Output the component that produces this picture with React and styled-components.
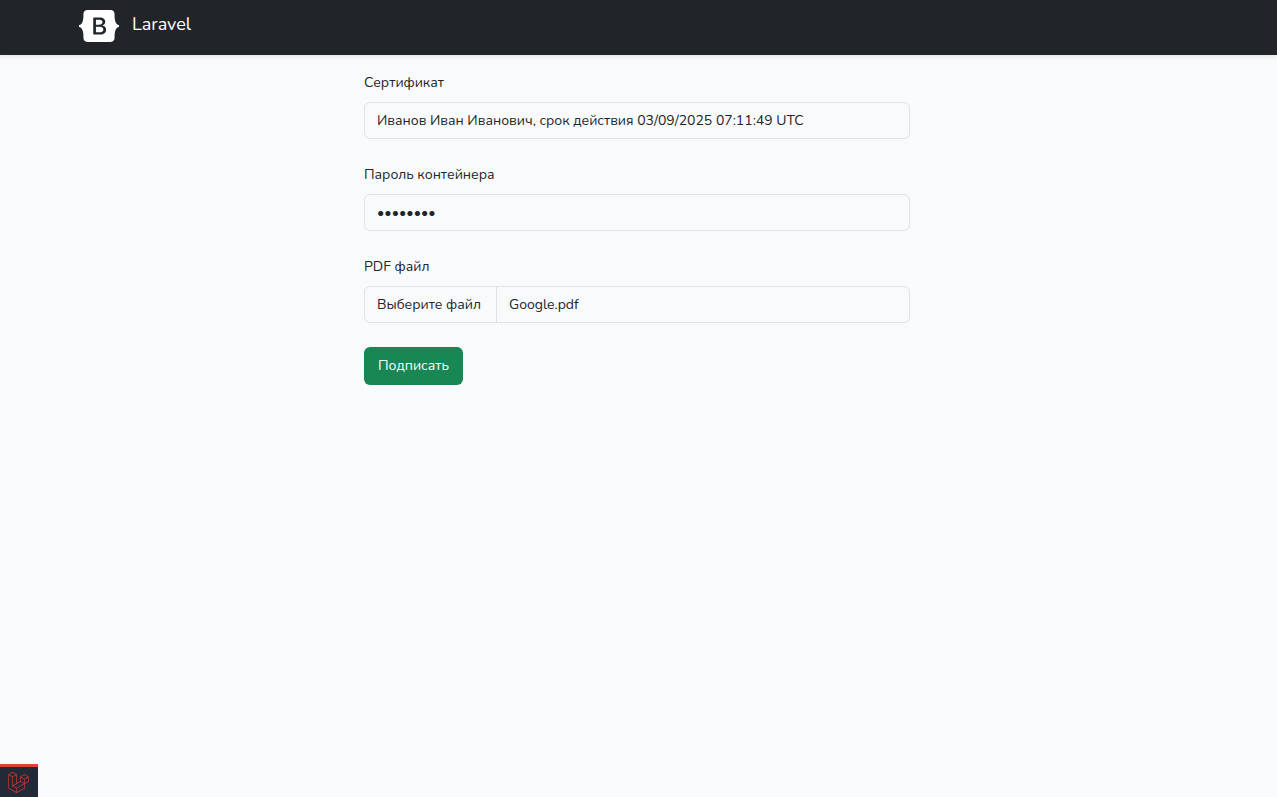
import React, { useState } from 'react';
import styled, { createGlobalStyle } from 'styled-components';
import { SiLaravel } from 'react-icons/si';

const GlobalStyle = createGlobalStyle`
  *,
  *::before,
  *::after {
    box-sizing: border-box;
  }

  body {
    margin: 0;
    background: #f8fafc;
    color: #212529;
    font-family: Nunito, 'Noto Sans', 'Open Sans', sans-serif;
    font-size: 14px;
    line-height: 23px;
  }
`;

const Container = styled.div`
  max-width: 1143px;
  margin: 0 auto;
  padding: 0 15px 0 12px;
`;

const Navbar = styled.nav`
  padding: 8px 0;
  background: #212529;
  box-shadow: 0 2px 4px rgba(0, 0, 0, 0.08);
`;

const Brand = styled.a`
  display: flex;
  gap: 13px;
  width: fit-content;
  height: 39px;
  padding-top: 2px;
  color: #fff;
  font-size: 18px;
  line-height: 28px;
  text-decoration: none;
`;

const Form = styled.form`
  display: flex;
  flex-direction: column;
  align-items: flex-start;
  gap: 24px;
  width: 100%;
  max-width: 546px;
  margin: 0 auto;
  padding: 16px 0;
`;

const Field = styled.div`
  display: flex;
  flex-direction: column;
  gap: 8px;
  position: relative;
  width: 100%;
`;

const Control = styled.input`
  display: block;
  width: 100%;
  height: 37px;
  margin: 0;
  padding: 6px 12px;
  border: 1px solid #dee2e6;
  border-radius: 6px;
  background: #f8fafc;
  color: inherit;
  font: inherit;
  appearance: none;
`;

const HiddenFileInput = styled.input`
  position: absolute;
  width: 1px;
  height: 1px;
  opacity: 0;
`;

const FilePicker = styled.label`
  display: flex;
  height: 37px;
  border: 1px solid #dee2e6;
  border-radius: 6px;
  overflow: hidden;
  cursor: pointer;
`;

const FilePart = styled.span`
  min-width: ${props => (props.$divided ? '132px' : '0')};
  padding: 6px 12px;
  border-right: ${props => (props.$divided ? '1px solid #dee2e6' : '0')};
`;

const SubmitButton = styled.button`
  min-width: 99px;
  height: 38px;
  padding: 7px 12px 8px;
  border: 0;
  border-radius: 6px;
  background: #198754;
  color: #fff;
  font: inherit;
  cursor: pointer;
`;

const DebugButton = styled.button`
  display: flex;
  align-items: center;
  justify-content: center;
  position: fixed;
  bottom: 0;
  left: 0;
  width: 38px;
  height: 33px;
  padding: 0 2px 0 0;
  border: 0;
  border-top: 3px solid #dc4437;
  background: #232936;
  color: #d33a31;
`;

const BootstrapLogo = () => (
  <svg width="40" height="32" viewBox="0 0 118 94" aria-hidden="true">
    <path
      fill="currentColor"
      fillRule="evenodd"
      clipRule="evenodd"
      d="M24.509 0c-6.733 0-11.715 5.893-11.492 12.284.214 6.14-.064 14.092-2.066 20.577C8.943 39.365 5.547 43.485 0 44.014v5.972c5.547.529 8.943 4.649 10.951 11.153 2.002 6.485 2.28 14.437 2.066 20.577C12.794 88.106 17.776 94 24.51 94H93.5c6.733 0 11.714-5.893 11.491-12.284-.214-6.14.064-14.092 2.066-20.577 2.009-6.504 5.396-10.624 10.943-11.153v-5.972c-5.547-.529-8.934-4.649-10.943-11.153-2.002-6.484-2.28-14.437-2.066-20.577C105.214 5.894 100.233 0 93.5 0H24.508zM80 57.863C80 66.663 73.436 72 62.543 72H44a2 2 0 01-2-2V24a2 2 0 012-2h18.437c9.083 0 15.044 4.92 15.044 12.474 0 5.302-4.01 10.049-9.119 10.88v.277C75.317 46.394 80 51.21 80 57.863zM60.521 28.34H49.948v14.934h8.905c6.884 0 10.68-2.772 10.68-7.727 0-4.643-3.264-7.207-9.012-7.207zM49.948 49.2v16.458H60.91c7.167 0 10.964-2.876 10.964-8.281 0-5.406-3.903-8.178-11.425-8.178H49.948z"
    />
  </svg>
);

const SignForm = () => {
  const [password, setPassword] = useState('password');
  const [fileName, setFileName] = useState('Google.pdf');

  const handleFile = (event) => {
    const file = event.target.files[0];
    if (file) setFileName(file.name);
  };

  return (
    <Form onSubmit={event => event.preventDefault()}>
      <Field>
        <label htmlFor="certificate">Сертификат</label>
        <Control as="select" id="certificate" name="certificate">
          <option>Иванов Иван Иванович, срок действия 03/09/2025 07:11:49 UTC</option>
        </Control>
      </Field>
      <Field>
        <label htmlFor="password">Пароль контейнера</label>
        <Control
          type="password"
          id="password"
          name="password"
          value={password}
          onChange={event => setPassword(event.target.value)}
        />
      </Field>
      <Field>
        <label htmlFor="file">PDF файл</label>
        <FilePicker>
          <HiddenFileInput type="file" id="file" name="file" accept=".pdf" onChange={handleFile} />
          <FilePart $divided>Выберите файл</FilePart>
          <FilePart>{fileName}</FilePart>
        </FilePicker>
      </Field>
      <SubmitButton type="submit">Подписать</SubmitButton>
    </Form>
  );
};

const App = () => (
  <>
    <GlobalStyle />
    <Navbar>
      <Container>
        <Brand href="/">
          <BootstrapLogo />
          <span>Laravel</span>
        </Brand>
      </Container>
    </Navbar>
    <Container as="main">
      <SignForm />
    </Container>
    <DebugButton type="button" aria-label="Debugbar">
      <SiLaravel size={21} />
    </DebugButton>
  </>
);

export default App;
